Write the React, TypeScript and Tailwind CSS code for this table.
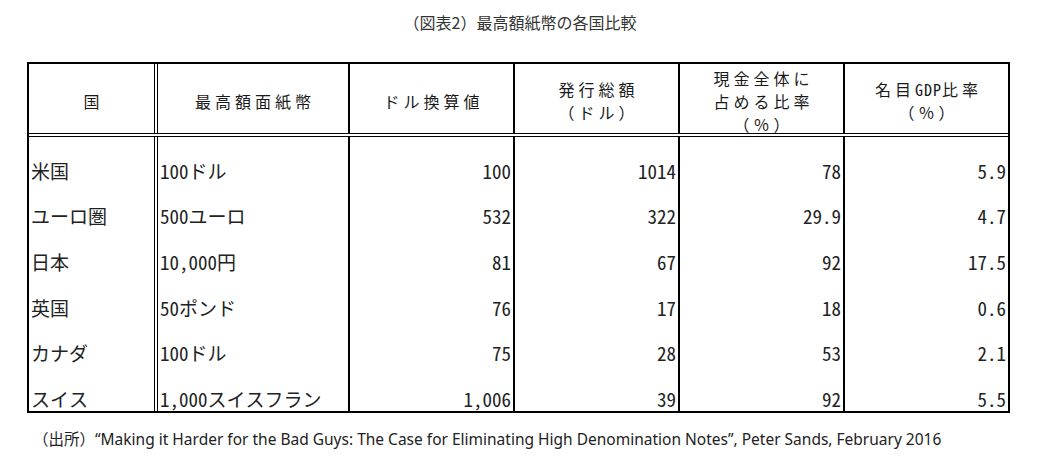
import type { ReactNode } from 'react';

const gothic = "font-['Noto_Sans_Mono_CJK_JP','Noto_Sans_CJK_JP',monospace]";

const widths = ['w-[129px]', 'w-[192px]', 'w-[165px]', 'w-[165px]', 'w-[165px]', 'w-[163px]'];
const borders = [
  'border-r-4 border-double border-black',
  'border-r-2 border-black',
  'border-r-2 border-black',
  'border-r-2 border-black',
  'border-r-2 border-black',
  '',
];

const headers: ReactNode[][] = [
  ['国'],
  ['最高額面紙幣'],
  ['ドル換算値'],
  ['発行総額', '（ドル）'],
  ['現金全体に', '占める比率', '（％）'],
  [
    <>
      名目<span className="tracking-[1px]">GDP</span>比率
    </>,
    '（％）',
  ],
];

const rows = [
  ['米国', '100ドル', '100', '1014', '78', '5.9'],
  ['ユーロ圏', '500ユーロ', '532', '322', '29.9', '4.7'],
  ['日本', '10,000円', '81', '67', '92', '17.5'],
  ['英国', '50ポンド', '76', '17', '18', '0.6'],
  ['カナダ', '100ドル', '75', '28', '53', '2.1'],
  ['スイス', '1,000スイスフラン', '1,006', '39', '92', '5.5'],
];

export default function App() {
  return (
    <div className="w-[1040px] h-[460px] bg-white text-[#1a1a1a]">
      <div className="h-[62px] pt-[11px] text-center text-[16px] leading-[22px] text-[#333] font-['Noto_Sans_CJK_JP',sans-serif]">
        （図表2）最高額紙幣の各国比較
      </div>

      <div className={`ml-[27px] w-[983px] border-2 border-black ${gothic}`}>
        <div className="flex h-[73px] border-b-4 border-double border-black">
          {headers.map((lines, i) => (
            <div
              key={i}
              className={`${widths[i]} ${borders[i]} flex flex-col items-center justify-center pt-[5px] pl-[4px] text-[16px] leading-[23px] tracking-[4px]`}
            >
              {lines.map((l, j) => (
                <span key={j}>{l}</span>
              ))}
            </div>
          ))}
        </div>

        <div className="flex h-[274px] flex-col">
          {rows.map(row => (
            <div key={row[0]} className="flex flex-1">
              {row.map((cell, i) => (
                <div
                  key={i}
                  className={`${widths[i]} ${borders[i]} flex items-end pb-[2px] text-[19px] leading-[20px] text-[#222] ${
                    i < 2 ? 'justify-start pl-[2px]' : 'justify-end pr-[2px]'
                  }`}
                >
                  {cell}
                </div>
              ))}
            </div>
          ))}
        </div>
      </div>

      <div className="mt-[15px] pl-[33px] text-[15.5px] leading-[22px] text-[#222] font-['Noto_Sans','Noto_Sans_CJK_JP',sans-serif]">
        （出所）“Making it Harder for the Bad Guys: The Case for Eliminating High Denomination Notes”, Peter Sands, February 2016
      </div>
    </div>
  );
}
